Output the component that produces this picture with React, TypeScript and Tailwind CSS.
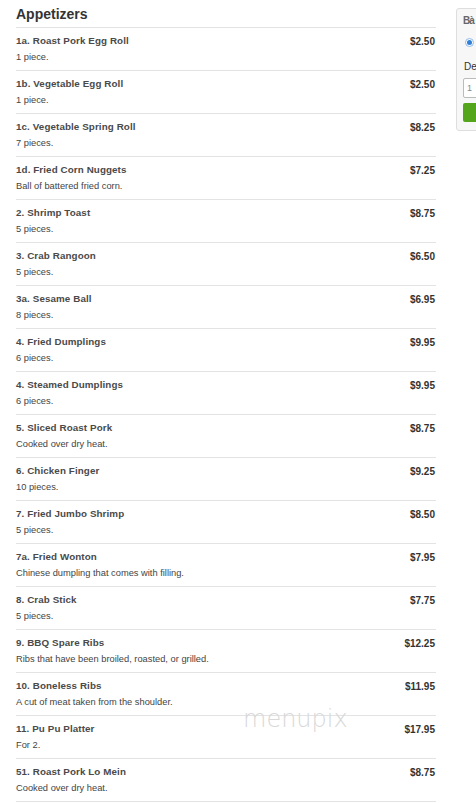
import React from "react";

const items: [string, string, string][] = [
  ["1a. Roast Pork Egg Roll", "1 piece.", "$2.50"],
  ["1b. Vegetable Egg Roll", "1 piece.", "$2.50"],
  ["1c. Vegetable Spring Roll", "7 pieces.", "$8.25"],
  ["1d. Fried Corn Nuggets", "Ball of battered fried corn.", "$7.25"],
  ["2. Shrimp Toast", "5 pieces.", "$8.75"],
  ["3. Crab Rangoon", "5 pieces.", "$6.50"],
  ["3a. Sesame Ball", "8 pieces.", "$6.95"],
  ["4. Fried Dumplings", "6 pieces.", "$9.95"],
  ["4. Steamed Dumplings", "6 pieces.", "$9.95"],
  ["5. Sliced Roast Pork", "Cooked over dry heat.", "$8.75"],
  ["6. Chicken Finger", "10 pieces.", "$9.25"],
  ["7. Fried Jumbo Shrimp", "5 pieces.", "$8.50"],
  ["7a. Fried Wonton", "Chinese dumpling that comes with filling.", "$7.95"],
  ["8. Crab Stick", "5 pieces.", "$7.75"],
  ["9. BBQ Spare Ribs", "Ribs that have been broiled, roasted, or grilled.", "$12.25"],
  ["10. Boneless Ribs", "A cut of meat taken from the shoulder.", "$11.95"],
  ["11. Pu Pu Platter", "For 2.", "$17.95"],
  ["51. Roast Pork Lo Mein", "Cooked over dry heat.", "$8.75"],
];

export default function App() {
  return (
    <div
      className="relative w-[476px] h-[803px] overflow-hidden bg-white flex text-[#333]"
      style={{ fontFamily: '"Liberation Sans", Arial, sans-serif' }}
    >
      <div className="w-[420px] ml-[16px] shrink-0">
        <div className="h-[28px] border-b border-[#e3e3e3] flex items-center">
          <h2 className="text-[14px] font-bold leading-none text-[#333] mt-[1px]">Appetizers</h2>
        </div>
        {items.map(([name, desc, price]) => (
          <div key={name} className="h-[43px] border-b border-[#e3e3e3] flex justify-between">
            <div className="pt-[7px]">
              <div className="text-[9.8px] font-bold leading-[12px] text-[#4a4a4a] tracking-[0.1px]">{name}</div>
              <div className="text-[9.3px] leading-[12px] mt-[4px] text-[#444]">{desc}</div>
            </div>
            <div className="pt-[8px] pr-[1px] text-[10px] font-bold leading-[12px] text-[#333]">{price}</div>
          </div>
        ))}
      </div>
      <div className="ml-[20px] mt-[8px] w-[40px] h-[123px] shrink-0 rounded-[3px] border border-[#dedede] bg-[#f7f7f7] pl-[6px] pt-[7px]">
        <div className="text-[10px] leading-[10px] text-[#666] font-bold tracking-[-1px]">Bà</div>
        <div className="mt-[12px] ml-[2px] w-[9px] h-[9px] rounded-full border border-[#8fb8e8] bg-white flex items-center justify-center">
          <div className="w-[5px] h-[5px] rounded-full bg-[#2e7fd8]" />
        </div>
        <div className="mt-[14px] ml-[1px] text-[10px] leading-[12px] text-[#333]">De</div>
        <div className="mt-[5px] h-[20px] rounded-[2px] border border-[#bbb] bg-white text-[9px] text-[#888] pl-[3px] leading-[18px]">1</div>
        <div className="mt-[5px] h-[19px] rounded-l-[2px] bg-[#55a51c]" />
      </div>
      <div
        className="absolute left-[243px] top-[707px] text-[24px] leading-none text-[#d8d8d8]"
        style={{ fontFamily: '"DejaVu Sans", sans-serif', fontWeight: 200 }}
      >
        menupix
      </div>
    </div>
  );
}
